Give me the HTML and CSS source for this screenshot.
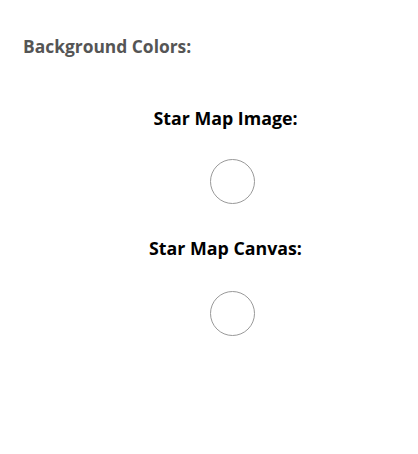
FILE: index.html
```html
<!DOCTYPE html>
<html>
<head>
<meta charset="utf-8">
<link rel="stylesheet" href="styles.css">
</head>
<body>
<div class="page">
  <h2 class="title">Background Colors:</h2>
  <div class="group">
    <div class="label">Star Map Image:</div>
    <div class="swatch"></div>
  </div>
  <div class="group">
    <div class="label">Star Map Canvas:</div>
    <div class="swatch"></div>
  </div>
</div>
</body>
</html>
```
FILE: styles.css
```css
html, body {
  margin: 0;
  padding: 0;
  background: #fff;
}
.page {
  font-family: "Open Sans", "Noto Sans", sans-serif;
  padding: 34px 0 0 23px;
}
.title {
  margin: 0;
  font-size: 17.4px;
  line-height: 24px;
  font-weight: 700;
  color: #555;
}
.group {
  width: 405px;
  display: flex;
  flex-direction: column;
  align-items: center;
}
.label {
  font-size: 17.8px;
  line-height: 24px;
  font-weight: 700;
  color: #000;
  margin-top: 48px;
}
.group + .group .label {
  margin-top: 32px;
}
.swatch {
  width: 43px;
  height: 43px;
  border: 1px solid #999;
  border-radius: 50%;
  margin-top: 29px;
  margin-left: 14px;
}
.group + .group .swatch {
  margin-top: 31px;
}
```
